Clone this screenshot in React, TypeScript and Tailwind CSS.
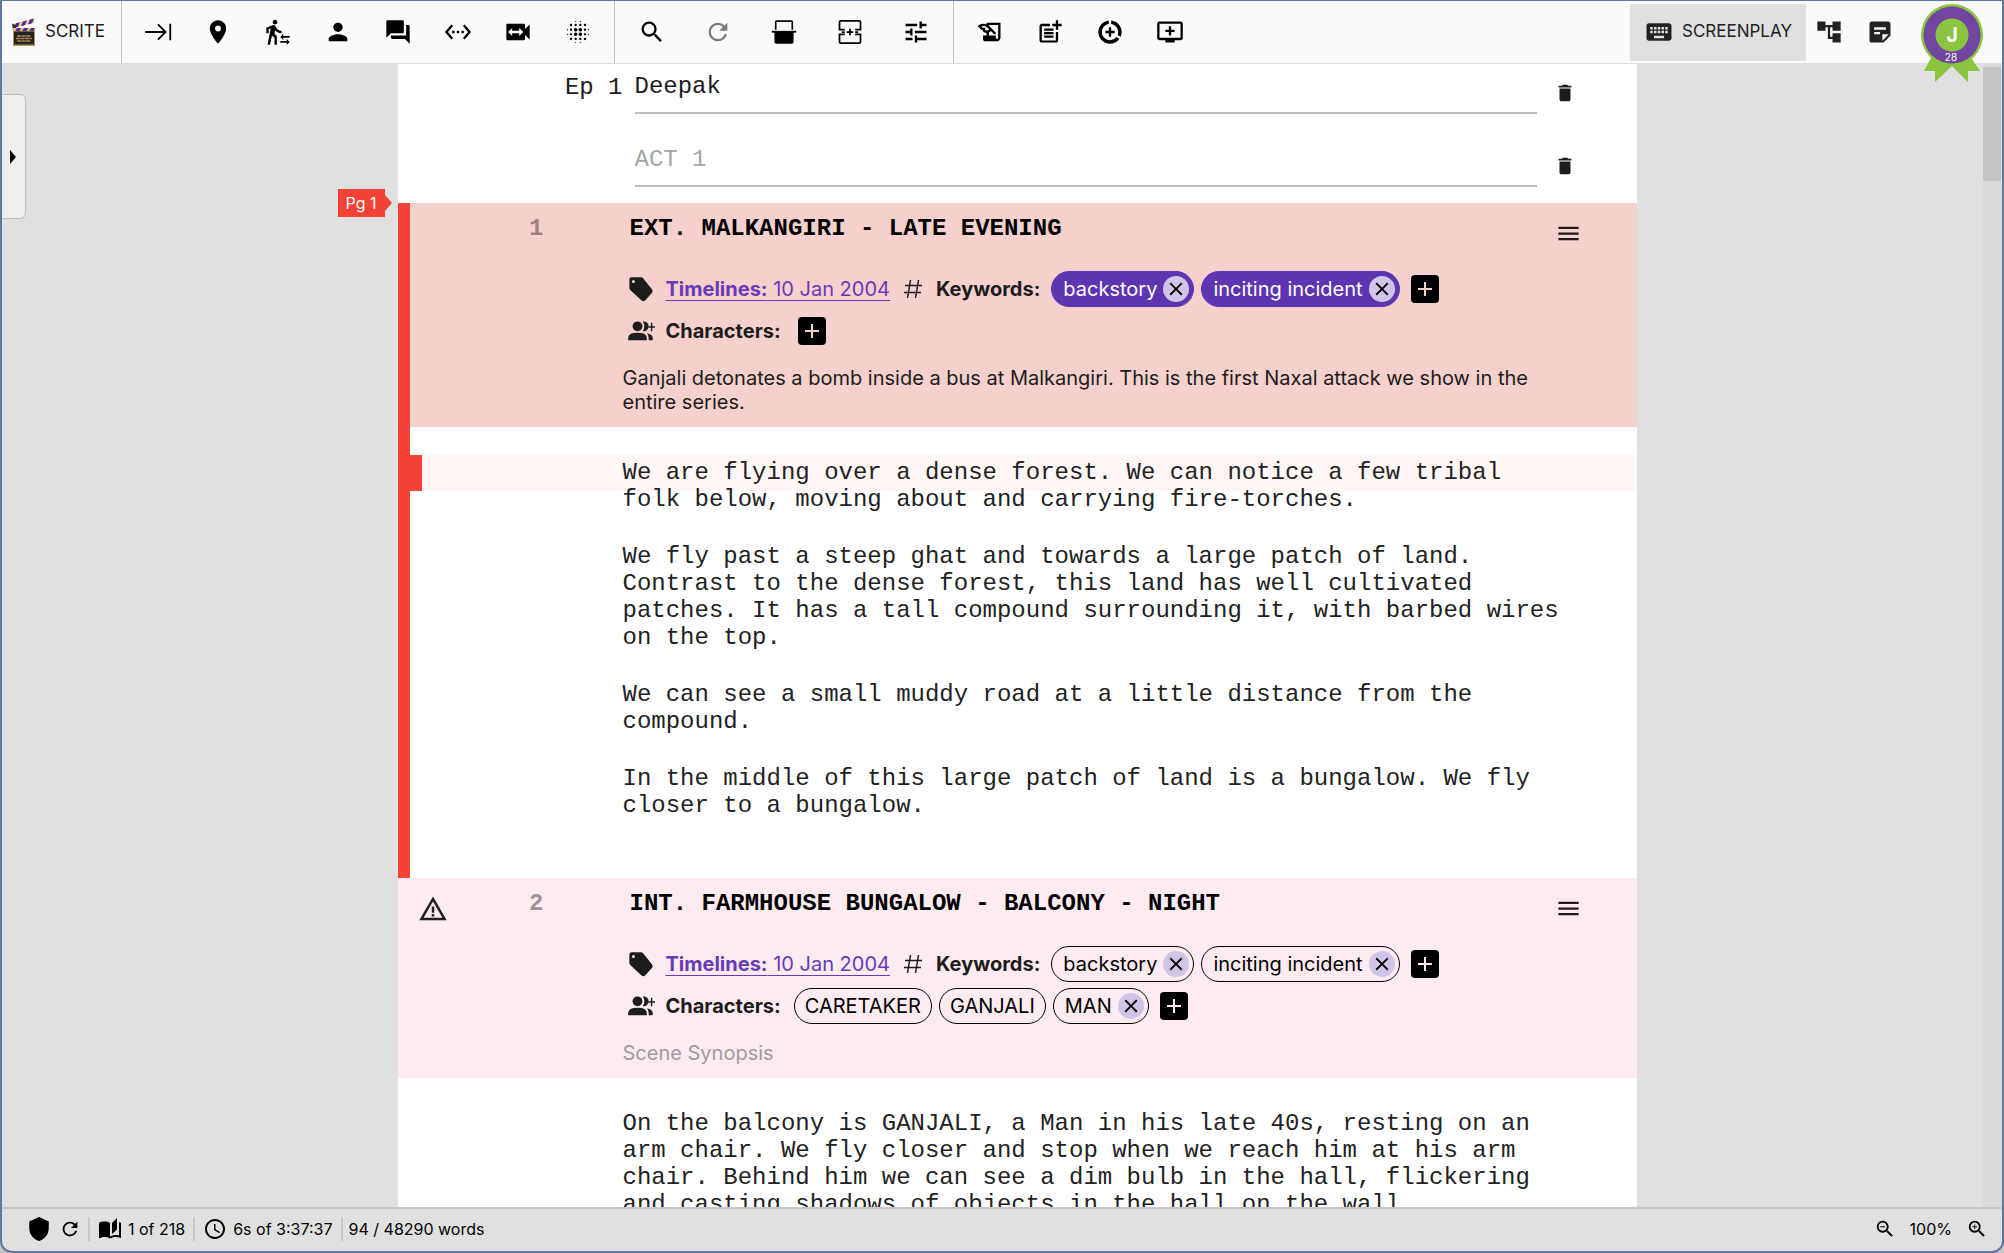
import React, { useState } from 'react';
import { clsx } from 'clsx';
import type { IconType } from 'react-icons';
import {
  MdPlace,
  MdTransferWithinAStation,
  MdPerson,
  MdQuestionAnswer,
  MdSettingsEthernet,
  MdSwitchVideo,
  MdBlurOn,
  MdSearch,
  MdRefresh,
  MdTune,
  MdHistoryEdu,
  MdPostAdd,
  MdDataSaverOn,
  MdAddToQueue,
  MdKeyboard,
  MdAccountTree,
  MdStickyNote2,
  MdDelete,
  MdMenu,
  MdClose,
  MdAdd,
  MdWarningAmber,
  MdShield,
  MdAutoStories,
  MdAccessTime,
  MdZoomOut,
  MdZoomIn,
} from 'react-icons/md';

interface Tool {
  label: string;
  icon: IconType | React.FC<{ className?: string }>;
  disabled?: boolean;
}

interface Chip {
  label: string;
  removable: boolean;
}

interface Scene {
  number: number;
  heading: string;
  timeline: string;
  keywords: Chip[];
  characters: Chip[];
  synopsis: string;
  paragraphs: string[];
  warning?: boolean;
}

const TabIcon: React.FC<{ className?: string }> = ({ className }) => (
  <svg viewBox="0 0 24 24" className={className} fill="none" stroke="currentColor" strokeWidth="1.600">
    <path d="M1 12H18M12 5.500L18.500 12L12 18.500M22.500 5V19" />
  </svg>
);

const ScanIcon: React.FC<{ className?: string }> = ({ className }) => (
  <svg viewBox="0 0 24 24" className={className} fill="currentColor">
    <path d="M4.200 10V3.500Q4.200 2 5.700 2H18.300Q19.800 2 19.800 3.500V10H18.400V3.400H5.600V10Z" />
    <rect x="1.500" y="11" width="21" height="1.500" />
    <path d="M3.800 12H20.200V20.500Q20.200 22 18.700 22H5.300Q3.800 22 3.800 20.500Z" />
  </svg>
);

const PageBreakIcon: React.FC<{ className?: string }> = ({ className }) => (
  <svg viewBox="0 0 24 24" className={className} fill="none" stroke="currentColor" strokeWidth="1.500">
    <path d="M7.500 10H3V3.500Q3 2.500 4 2.500H20Q21 2.500 21 3.500V10H16.500" />
    <path d="M7.500 14H3V20.500Q3 21.500 4 21.500H20Q21 21.500 21 20.500V14H16.500" />
    <path d="M12 9.200V14.800M9.200 12H14.800M5 12H7.500M16.500 12H19" />
  </svg>
);

const TagIcon: React.FC<{ className?: string }> = ({ className }) => (
  <svg viewBox="0 0 24 24" className={className} fill="currentColor">
    <path
      fillRule="evenodd"
      d="M2 4Q2 2 4 2H12Q13.200 2 14 3L21.500 12.500Q22.500 14 21.500 15.200L15.500 21.800Q14 23 12.500 21.800L3 13Q2 12 2 11ZM5.500 4.200A1.300 1.300 0 1 0 5.500 6.800A1.300 1.300 0 1 0 5.500 4.200Z"
    />
  </svg>
);

const HashIcon: React.FC<{ className?: string }> = ({ className }) => (
  <svg viewBox="0 0 24 24" className={className} fill="none" stroke="currentColor" strokeWidth="1.500">
    <path d="M9.500 3L6.500 21M17.500 3L14.500 21M4 8.500H21M3 15.500H20" />
  </svg>
);

const CharactersIcon: React.FC<{ className?: string }> = ({ className }) => (
  <svg viewBox="0 0 24 24" className={className} fill="currentColor">
    <circle cx="9" cy="8" r="4.200" />
    <path d="M1 20V18Q1 13.500 9 13.500Q17 13.500 17 18V20Z" />
    <path d="M13.500 3.900A4.200 4.200 0 1 1 13.500 12.100Q16.300 8 13.500 3.900Z" />
    <path d="M17 14Q22 14.800 22 18V20H18.600V18Q18.600 15.500 17 14Z" />
    <path d="M20.500 5H21.700V8H24V9.200H21.700V12.200H20.500V9.200H18.400V8H20.500Z" />
  </svg>
);

const Logo: React.FC = () => (
  <svg viewBox="0 0 26 30" className="h-[30px] w-[26px]">
    <path d="M2 7L23 1.500L24 5.500L3 11Z" fill="#e6cfa6" />
    <path d="M5 6.200L9 5.200L7 9.900L3 11ZM12 4.400L16 3.300L14 8.100L10 9.200ZM19 2.600L23 1.500L21 6.300L17 7.400Z" fill="#4f2c86" />
    <path d="M1 6.500L5 8V14H2Z" fill="#33333f" />
    <rect x="2" y="11" width="22" height="4" fill="#dcb989" />
    <path d="M6 11H10L8 15H4ZM13 11H17L15 15H11ZM20 11H24L22 15H18Z" fill="#4f2c86" />
    <rect x="2" y="14" width="22" height="15" fill="#b8945a" />
    <rect x="3" y="14.500" width="20" height="13" fill="#262422" />
    <path d="M6 19H20M5 21.500H21M6 24H20" stroke="#a88450" strokeWidth="1.600" strokeDasharray="4 0.500" />
  </svg>
);

const formatTools: Tool[] = [
  { label: 'Scene heading', icon: TabIcon },
  { label: 'Location', icon: MdPlace },
  { label: 'Action', icon: MdTransferWithinAStation },
  { label: 'Character', icon: MdPerson },
  { label: 'Dialogue', icon: MdQuestionAnswer },
  { label: 'Parenthetical', icon: MdSettingsEthernet },
  { label: 'Shot', icon: MdSwitchVideo },
  { label: 'Transition', icon: MdBlurOn },
];

const editTools: Tool[] = [
  { label: 'Search', icon: MdSearch },
  { label: 'Redo', icon: MdRefresh, disabled: true },
  { label: 'Split scene', icon: ScanIcon },
  { label: 'Page break', icon: PageBreakIcon },
  { label: 'Options', icon: MdTune },
];

const insertTools: Tool[] = [
  { label: 'Add scene', icon: MdHistoryEdu },
  { label: 'Add act', icon: MdPostAdd },
  { label: 'Add interval', icon: MdDataSaverOn },
  { label: 'Add episode', icon: MdAddToQueue },
];

const storyKeywords: Chip[] = [
  { label: 'backstory', removable: true },
  { label: 'inciting incident', removable: true },
];

const scenes: Scene[] = [
  {
    number: 1,
    heading: 'EXT. MALKANGIRI - LATE EVENING',
    timeline: '10 Jan 2004',
    keywords: storyKeywords,
    characters: [],
    synopsis:
      'Ganjali detonates a bomb inside a bus at Malkangiri. This is the first Naxal attack we show in the entire series.',
    paragraphs: [
      'We are flying over a dense forest. We can notice a few tribal folk below, moving about and carrying fire-torches.',
      'We fly past a steep ghat and towards a large patch of land. Contrast to the dense forest, this land has well cultivated patches. It has a tall compound surrounding it, with barbed wires on the top.',
      'We can see a small muddy road at a little distance from the compound.',
      'In the middle of this large patch of land is a bungalow. We fly closer to a bungalow.',
    ],
  },
  {
    number: 2,
    heading: 'INT. FARMHOUSE BUNGALOW - BALCONY - NIGHT',
    timeline: '10 Jan 2004',
    keywords: storyKeywords,
    characters: [
      { label: 'CARETAKER', removable: false },
      { label: 'GANJALI', removable: false },
      { label: 'MAN', removable: true },
    ],
    synopsis: '',
    warning: true,
    paragraphs: [
      'On the balcony is GANJALI, a Man in his late 40s, resting on an arm chair. We fly closer and stop when we reach him at his arm chair. Behind him we can see a dim bulb in the hall, flickering and casting shadows of objects in the hall on the wall.',
    ],
  },
];

const ToolButton: React.FC<{ tool: Tool; wide?: boolean }> = ({ tool, wide }) => {
  const Icon = tool.icon;
  return (
    <button
      aria-label={tool.label}
      disabled={tool.disabled}
      className={clsx('flex h-full items-center justify-center disabled:opacity-50', wide ? 'w-[66px]' : 'w-[60px]')}
    >
      <Icon className="h-7 w-7" />
    </button>
  );
};

const AddButton: React.FC<{ label: string; tint: string }> = ({ label, tint }) => (
  <button aria-label={label} className={clsx('ml-1 flex h-7 w-7 items-center justify-center rounded-sm bg-black', tint)}>
    <MdAdd className="h-6 w-6" />
  </button>
);

const ChipTag: React.FC<{ chip: Chip; filled?: boolean }> = ({ chip, filled }) => (
  <span
    className={clsx(
      'flex h-9 items-center gap-[6px] rounded-full border',
      chip.removable ? 'pr-1 pl-[11px]' : 'px-[10px]',
      filled ? 'border-[#5e35b1] bg-[#5e35b1] text-white' : 'border-black text-black'
    )}
  >
    {chip.label}
    {chip.removable && (
      <button
        aria-label={`Remove ${chip.label}`}
        className="flex h-[26px] w-[26px] items-center justify-center rounded-full bg-[#d1c4e9] text-black"
      >
        <MdClose className="h-[22px] w-[22px]" />
      </button>
    )}
  </span>
);

const BreakRow: React.FC<{ id: string; label: string; value?: string; placeholder?: string }> = ({
  id,
  label,
  value,
  placeholder,
}) => (
  <div className="flex h-[73px] font-['Liberation_Mono',monospace] text-2xl">
    <label htmlFor={id} className="w-[237px] shrink-0 pr-3 text-right leading-[47px]">
      {label}
    </label>
    <input
      id={id}
      aria-label={label || 'Act name'}
      defaultValue={value}
      placeholder={placeholder}
      className="h-[50px] min-w-0 flex-1 border-b-2 border-[#bdbdbd] pb-1 placeholder:text-[#a6a6a6] focus:outline-none"
    />
    <button aria-label="Delete" className="mr-[60px] ml-4 flex h-[58px] w-6 items-center justify-center text-[#1c1c1c]">
      <MdDelete className="h-[22px] w-[22px]" />
    </button>
  </div>
);

const SceneBlock: React.FC<{ scene: Scene; active: boolean; onSelect: () => void }> = ({ scene, active, onSelect }) => {
  const tint = active ? 'text-[#f5d0cd]' : 'text-[#fcebf1]';
  return (
    <section className="relative flex" onClick={onSelect}>
      {active && <div className="w-3 shrink-0 bg-[#f44336]" />}
      {active && (
        <div className="absolute -top-[14px] right-full mr-[6px] flex items-center">
          <span className="bg-[#f44336] px-2 text-base leading-7 whitespace-nowrap text-white">Pg 1</span>
          <svg viewBox="0 0 7 16" className="h-4 w-[7px]">
            <path d="M0 0L7 8L0 16Z" fill="#f44336" />
          </svg>
        </div>
      )}

      <div className="min-w-0 flex-1">
        {/* Scene header */}
        <div className={clsx('flex', active ? 'bg-[#f5d0cd]' : 'bg-[#fcebf1] pl-3')}>
          <div className="flex w-[213px] shrink-0 pt-4">
            <span className="w-[46px] text-[#222]">
              {scene.warning && <MdWarningAmber className="mx-auto h-[30px] w-[30px]" />}
            </span>
            <span className="flex-1 pr-[79px] text-right font-['Liberation_Mono',monospace] text-2xl leading-5 font-bold text-black/40">
              {scene.number}
            </span>
          </div>

          <div className="min-w-0 flex-1 pt-2 text-xl leading-6 text-[#1c1c1c]">
            <div className="flex h-[60px] items-start">
              <input
                aria-label={`Scene ${scene.number} heading`}
                defaultValue={scene.heading}
                className="h-[34px] min-w-0 flex-1 pl-[7px] font-['Liberation_Mono',monospace] text-2xl font-bold text-black focus:outline-none"
              />
              <button aria-label="Scene menu" className="mt-2 mr-[54px] flex h-7 w-7 items-center justify-center">
                <MdMenu className="h-[27px] w-[27px]" />
              </button>
            </div>

            <div className="flex h-9 items-center gap-[7px] pl-1">
              <TagIcon className="mr-1 h-7 w-7" />
              <a href="#timelines" className="text-[#673ab7] underline decoration-1 underline-offset-4">
                <b className="font-bold">Timelines:</b> {scene.timeline}
              </a>
              <HashIcon className="mx-1 h-6 w-6" />
              <b className="mr-1 font-bold">Keywords:</b>
              {scene.keywords.map((chip) => (
                <ChipTag key={chip.label} chip={chip} filled={active} />
              ))}
              <AddButton label="Add keyword" tint={tint} />
            </div>

            <div className="mt-[6px] flex h-9 items-center gap-[7px] pl-1">
              <CharactersIcon className="mr-1 h-7 w-7" />
              <b className="mr-[6px] font-bold">Characters:</b>
              {scene.characters.map((chip) => (
                <ChipTag key={chip.label} chip={chip} />
              ))}
              <AddButton label="Add character" tint={tint} />
            </div>

            <textarea
              aria-label={`Scene ${scene.number} synopsis`}
              defaultValue={scene.synopsis}
              placeholder="Scene Synopsis"
              rows={scene.synopsis ? 2 : 1}
              className="mt-[17px] mb-[13px] block w-[930px] resize-none overflow-hidden placeholder:text-[#a39a9e] focus:outline-none"
            />
          </div>
        </div>

        {/* Scene content */}
        <div className="relative pt-8 pb-[59px]">
          {active && (
            <div className="absolute inset-x-0 top-7 h-9 bg-[#fff6f6]">
              <div className="h-full w-3 bg-[#f44336]" />
            </div>
          )}
          <div
            className={clsx(
              "relative flex flex-col gap-[30px] font-['Liberation_Mono',monospace] text-2xl leading-[27px] text-[#222]",
              active ? 'pl-[213px]' : 'pl-[225px]'
            )}
          >
            {scene.paragraphs.map((text) => (
              <p key={text} className="max-w-[940px]">
                {text}
              </p>
            ))}
          </div>
        </div>
      </div>
    </section>
  );
};

const UserBadge: React.FC = () => (
  <button aria-label="Account" className="relative h-full w-16">
    <svg viewBox="0 0 64 80" className="absolute top-[3px] left-0 h-20 w-16">
      <path d="M12 52L4 67H15V78L32 62L48 78V67H60L50 52Z" fill="#8bc53f" />
      <circle cx="32" cy="31" r="31" fill="#8bc53f" />
      <circle cx="32" cy="31" r="28.500" fill="#7145a0" />
      <circle cx="32" cy="31" r="16.500" fill="#8bc53f" />
      <text x="32" y="38" textAnchor="middle" fill="#fff" fontSize="20" fontWeight="700">
        J
      </text>
      <text x="31" y="57" textAnchor="middle" fill="#fff" fontSize="10">
        28
      </text>
    </svg>
  </button>
);

const App: React.FC = () => {
  const [activeScene, setActiveScene] = useState(1);

  return (
    <div className="h-screen bg-[#c4c4c4]">
      <div className="flex h-full flex-col overflow-hidden rounded-b-xl border-2 border-t border-[#5f779f] bg-[#e0e0e0] font-['Inter','Roboto',sans-serif] text-[#1c1c1c]">
        {/* Toolbar */}
        <header className="relative z-10 flex h-[63px] shrink-0 border-b border-[#e0e0e0] bg-[#fafafa] text-black">
          <button className="flex w-[120px] shrink-0 items-center gap-2 border-r border-[#c4c4c4] pl-[9px] text-[17px] text-[#1c1c1c]">
            <Logo />
            SCRITE
          </button>
          <nav className="flex border-r border-[#c4c4c4] px-[6px]">
            {formatTools.map((tool) => (
              <ToolButton key={tool.label} tool={tool} />
            ))}
          </nav>
          <nav className="flex border-r border-[#c4c4c4] px-1">
            {editTools.map((tool) => (
              <ToolButton key={tool.label} tool={tool} wide />
            ))}
          </nav>
          <nav className="flex px-[6px]">
            {insertTools.map((tool) => (
              <ToolButton key={tool.label} tool={tool} />
            ))}
          </nav>

          <div className="ml-auto flex items-center pr-[18px] text-[#222]">
            <button className="flex h-[57px] w-[176px] items-center justify-center gap-2 bg-[#e0e0e0] text-[17px]">
              <MdKeyboard className="h-[30px] w-[30px]" />
              SCREENPLAY
            </button>
            <button aria-label="Structure" className="flex h-full w-[45px] items-center justify-center">
              <MdAccountTree className="h-7 w-7" />
            </button>
            <button aria-label="Notebook" className="mr-[11px] flex h-full w-[58px] items-center justify-center">
              <MdStickyNote2 className="h-7 w-7" />
            </button>
            <UserBadge />
          </div>
        </header>

        {/* Editor */}
        <div className="flex min-h-0 flex-1">
          <aside className="w-[49px] shrink-0 pt-[30px]">
            <button
              aria-label="Open side panel"
              className="flex h-[125px] w-6 items-center rounded-r-md border border-l-0 border-[#bdbdbd] bg-[#eeeeee] pl-2"
            >
              <svg viewBox="0 0 6 14" className="h-[14px] w-[6px]">
                <path d="M0 0L6 7L0 14Z" />
              </svg>
            </button>
          </aside>
          <main className="flex min-w-0 flex-1 justify-center overflow-hidden">
            <article className="w-full max-w-[1239px] self-start bg-white">
              <BreakRow id="episode" label="Ep 1" value="Deepak" />
              <div className="h-[66px]">
                <BreakRow id="act" label="" placeholder="ACT 1" />
              </div>
              {scenes.map((scene) => (
                <SceneBlock
                  key={scene.number}
                  scene={scene}
                  active={scene.number === activeScene}
                  onSelect={() => setActiveScene(scene.number)}
                />
              ))}
            </article>
          </main>
          <div className="w-[19px] shrink-0 bg-[#dadada] pt-[3px] pr-px">
            <div className="h-[114px] bg-[#c3c3c3]" />
          </div>
        </div>

        {/* Status bar */}
        <footer className="flex h-11 shrink-0 items-center border-t-2 border-[#c8c8c8] pr-[14px] pb-[2px] pl-6 text-base text-black">
          <MdShield className="h-[26px] w-[26px]" />
          <button aria-label="Refresh" className="mx-[6px] flex h-6 w-6 items-center justify-center">
            <MdRefresh className="h-[22px] w-[22px]" />
          </button>
          <span className="flex h-6 items-center gap-[6px] border-l-2 border-[#c8c8c8] px-2">
            <MdAutoStories className="h-6 w-6" />1 of 218
          </span>
          <span className="flex h-6 items-center gap-[6px] border-l-2 border-[#c8c8c8] px-2">
            <MdAccessTime className="h-6 w-6" />
            6s of 3:37:37
          </span>
          <span className="flex h-6 items-center border-l-2 border-[#c8c8c8] px-[6px]">94 / 48290 words</span>
          <div className="ml-auto flex items-center gap-[14px]">
            <button aria-label="Zoom out">
              <MdZoomOut className="h-[22px] w-[22px]" />
            </button>
            <span>100%</span>
            <button aria-label="Zoom in">
              <MdZoomIn className="h-[22px] w-[22px]" />
            </button>
          </div>
        </footer>
      </div>
    </div>
  );
};

export default App;
